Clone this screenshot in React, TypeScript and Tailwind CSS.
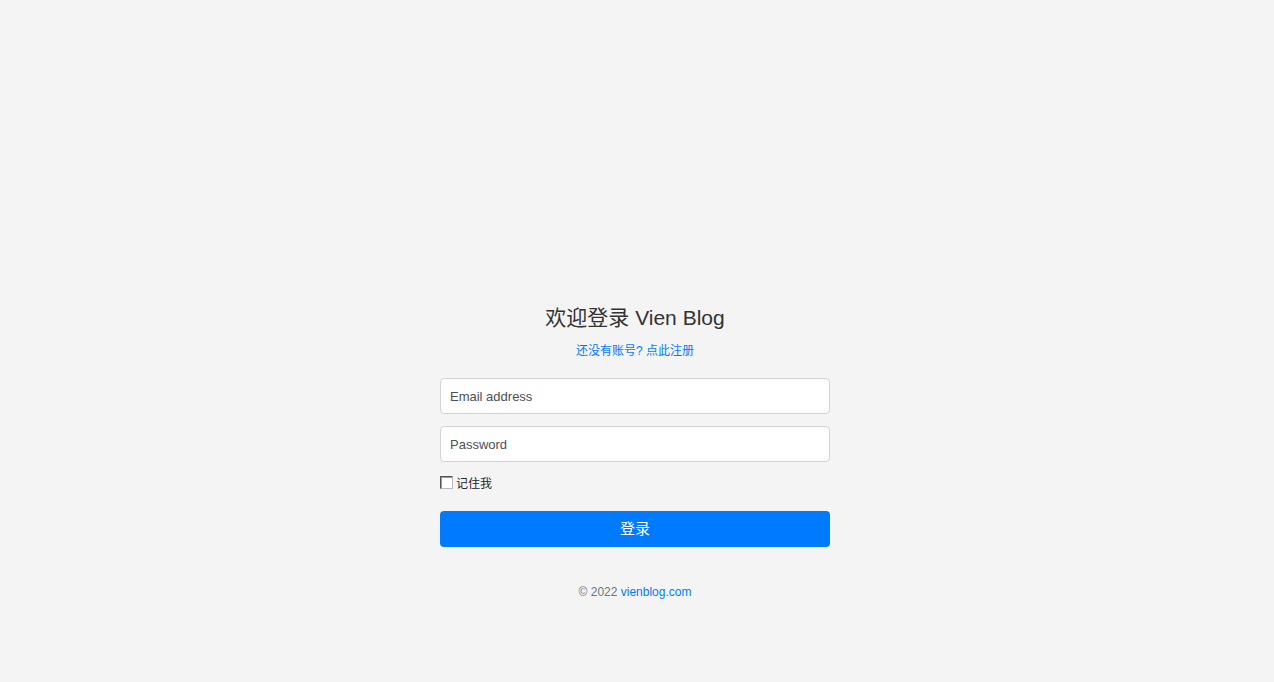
export default function App() {
  return (
    <div
      className="min-h-screen bg-[#f4f4f4] pt-[304px] pr-[4px]"
      style={{ fontFamily: '"Liberation Sans", Arial, "Noto Sans CJK SC", sans-serif' }}
    >
      <form className="mx-auto flex w-[390px] flex-col" onSubmit={(e) => e.preventDefault()}>
        <h1 className="text-center text-[21px] leading-[28px] font-normal text-[#333]">
          欢迎登录 Vien Blog
        </h1>
        <p className="mt-[10px] text-center text-[12px] leading-[18px]">
          <a href="#" className="text-[#007bff]">
            还没有账号? 点此注册
          </a>
        </p>
        <input
          type="email"
          placeholder="Email address"
          className="mt-[18px] h-[36px] w-full rounded-[4px] border border-[#ced4da] bg-white px-[9px] text-[13px] text-[#495057] placeholder:text-[#495057] outline-none"
        />
        <input
          type="password"
          placeholder="Password"
          className="mt-[12px] h-[36px] w-full rounded-[4px] border border-[#ced4da] bg-white px-[9px] text-[13px] text-[#495057] placeholder:text-[#495057] outline-none"
        />
        <label className="mt-[12px] flex h-[16px] items-center gap-[3px] text-[12px] text-[#212529]">
          <input
            type="checkbox"
            className="h-[13px] w-[13px] appearance-none border border-t-[#555] border-l-[#555] border-r-[#bbb] border-b-[#bbb] bg-white shadow-[inset_1px_1px_0_#999]"
          />
          <span className="pt-[3px]">记住我</span>
        </label>
        <button
          type="submit"
          className="mt-[21px] h-[36px] w-full rounded-[4px] bg-[#007bff] text-[15px] text-white"
        >
          登录
        </button>
        <p className="mt-[36px] text-center text-[12px] leading-[18px] text-[#6c757d]">
          © 2022 <a href="#" className="text-[#007bff]">vienblog.com</a>
        </p>
      </form>
    </div>
  );
}
